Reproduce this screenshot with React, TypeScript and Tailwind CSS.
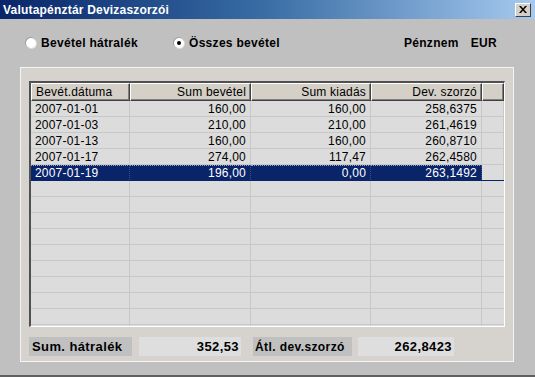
import React from "react";

const rows = [
  { date: "2007-01-01", bev: "160,00", kiad: "160,00", dev: "258,6375" },
  { date: "2007-01-03", bev: "210,00", kiad: "210,00", dev: "261,4619" },
  { date: "2007-01-13", bev: "160,00", kiad: "160,00", dev: "260,8710" },
  { date: "2007-01-17", bev: "274,00", kiad: "117,47", dev: "262,4580" },
  { date: "2007-01-19", bev: "196,00", kiad: "0,00", dev: "263,1492" },
];

const headCell =
  "h-full flex items-center border-t border-l border-t-white border-l-white border-b border-r border-b-[#404040] border-r-[#404040] shadow-[inset_-1px_-1px_0_#808080] px-[4px]";

const Radio: React.FC<{ checked?: boolean; label: string; width: string }> = ({
  checked,
  label,
  width,
}) => (
  <div className={`flex items-center gap-[4px] ${width}`}>
    <div className="w-[12px] h-[12px] rounded-full bg-gradient-to-br from-[#808080] to-white p-[1px]">
      <div className="w-full h-full rounded-full bg-white flex items-center justify-center">
        {checked && <div className="w-[4px] h-[4px] rounded-full bg-black" />}
      </div>
    </div>
    <span className="text-[12px] font-bold tracking-[0.3px] text-black">{label}</span>
  </div>
);

const App: React.FC = () => {
  const emptyRows = Array.from({ length: 10 });

  return (
    <div
      className="w-[535px] h-[377px] bg-[#c0c0c0] overflow-hidden flex flex-col border-b-2 border-b-[#606060]"
      style={{ fontFamily: '"Liberation Sans", Arial, sans-serif' }}
    >
      {/* title bar */}
      <div className="h-[19px] shrink-0 flex items-center justify-between pl-[3px] pr-[4px] bg-gradient-to-r from-[#0a246a] via-[#3a6ea5] to-[#a6caf0]">
        <span className="text-white text-[12px] font-bold tracking-[0.2px]">
          Valutapénztár Devizaszorzói
        </span>
        <div className="w-[16px] h-[14px] bg-[#d4d0c8] border-t border-l border-white border-b border-r border-b-[#404040] border-r-[#404040] flex items-center justify-center">
          <svg width="8" height="7" viewBox="0 0 8 7">
            <path d="M0 0h2l2 2.5L6 0h2L5 3.5 8 7H6L4 4.5 2 7H0l3-3.5z" fill="#000" />
          </svg>
        </div>
      </div>

      {/* radio row */}
      <div className="h-[48px] shrink-0 flex items-center pl-[25px] pr-[38px]">
        <Radio label="Bevétel hátralék" width="w-[148px]" />
        <Radio checked label="Összes bevétel" width="w-auto" />
        <div className="ml-auto flex items-center gap-[12px] text-[12px] font-bold tracking-[0.3px]">
          <span>Pénznem</span>
          <span>EUR</span>
        </div>
      </div>

      {/* panel */}
      <div className="ml-[20px] mr-[21px] h-[295px] bg-[#d6d3ce] border border-[#f4f4f4] px-[8px] pt-[13px] flex flex-col">
        <div className="h-[246px] bg-[#dcdcdc] border-t-2 border-l-2 border-t-[#505050] border-l-[#505050] border-r border-b border-r-white border-b-white overflow-hidden text-[12px] tracking-[0.2px]">
          <div className="h-[18px] flex bg-[#d4d0c8]">
            <div className={`${headCell} w-[99px]`}>Bevét.dátuma</div>
            <div className={`${headCell} w-[121px] justify-end`}>Sum bevétel</div>
            <div className={`${headCell} w-[120px] justify-end`}>Sum kiadás</div>
            <div className={`${headCell} w-[111px] justify-end`}>Dev. szorzó</div>
            <div className={`${headCell} w-[22px]`} />
          </div>
          {rows.map((r, i) => {
            const sel = i === rows.length - 1;
            const cell = sel
              ? "h-full flex items-center px-[4px] border-r border-r-[#3a4f8a] border-t border-dotted border-t-[#9aa6c8]"
              : "h-full flex items-center px-[4px] border-r border-r-[#c8c8c8]";
            return (
              <div
                key={r.date}
                className={`h-[16px] flex border-b ${
                  sel ? "bg-[#0a246a] text-white border-b-[#0a246a]" : "text-black border-b-[#c8c8c8]"
                }`}
              >
                <div className={`${cell} w-[99px]`}>{r.date}</div>
                <div className={`${cell} w-[121px] justify-end`}>{r.bev}</div>
                <div className={`${cell} w-[120px] justify-end`}>{r.kiad}</div>
                <div className={`${cell} w-[111px] justify-end`}>{r.dev}</div>
                <div className="w-[22px] h-full bg-[#dcdcdc] border-r border-r-[#c8c8c8]" />
              </div>
            );
          })}
          {emptyRows.map((_, i) => (
            <div key={i} className="h-[16px] flex border-b border-b-[#c8c8c8]">
              <div className="w-[99px] border-r border-r-[#c8c8c8]" />
              <div className="w-[121px] border-r border-r-[#c8c8c8]" />
              <div className="w-[120px] border-r border-r-[#c8c8c8]" />
              <div className="w-[111px] border-r border-r-[#c8c8c8]" />
              <div className="w-[22px]" />
            </div>
          ))}
        </div>

        {/* footer */}
        <div className="mt-[10px] h-[19px] flex text-[13px] font-bold tracking-[0.4px] text-black">
          <div className="w-[103px] bg-[#c0c0c0] flex items-center px-[3px]">Sum. hátralék</div>
          <div className="w-[102px] ml-[7px] bg-[#dedede] flex items-center justify-end pr-[2px]">352,53</div>
          <div className="w-[99px] ml-[12px] bg-[#c0c0c0] flex items-center px-[2px] text-[12px]">Átl. dev.szorzó</div>
          <div className="w-[96px] ml-[6px] bg-[#dedede] flex items-center justify-end pr-[2px]">262,8423</div>
        </div>
      </div>
    </div>
  );
};

export default App;
